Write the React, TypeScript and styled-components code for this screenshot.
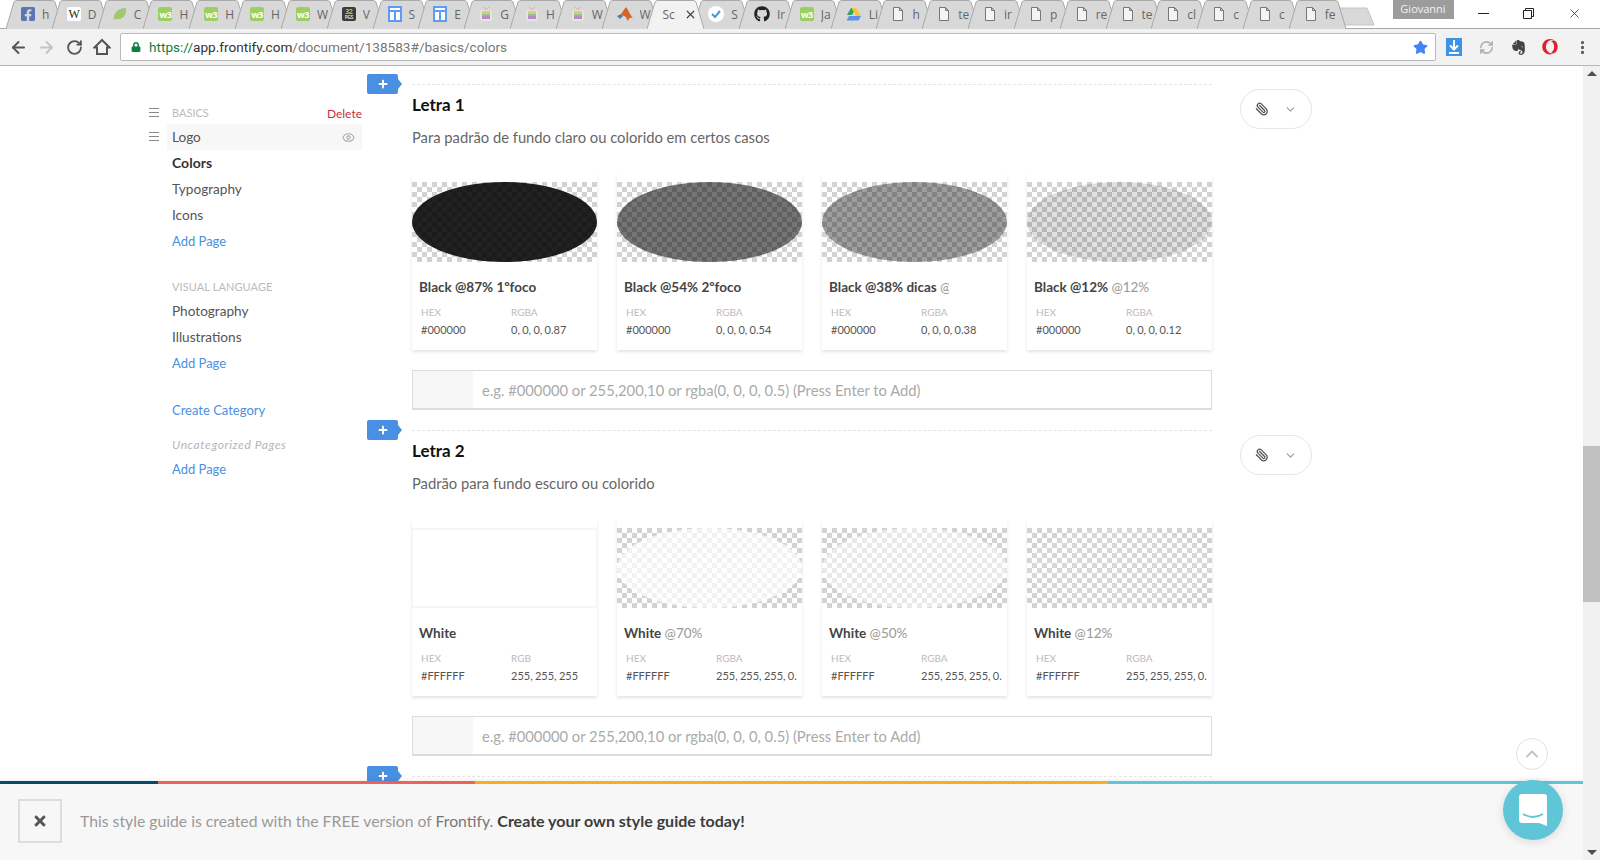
import styled, { createGlobalStyle } from 'styled-components';
import { ArrowLeft, ArrowRight, ChevronDown, ChevronUp, Eye, MoreVertical, Paperclip, RefreshCw, RotateCw, Star, X } from 'lucide-react';
import { FaFacebookSquare, FaGithub, FaLock, FaOpera, FaPlus, FaTimes } from 'react-icons/fa';
import { SiEvernote } from 'react-icons/si';

const GlobalStyle = createGlobalStyle`
  html, body {
    margin: 0;
    padding: 0;
    height: 860px;
    overflow: hidden;
    background: #fff;
    font-family: Lato, "Open Sans", sans-serif;
  }
  * { box-sizing: border-box; }
`;

const Page = styled.div`
  width: 1600px;
  height: 860px;
  display: flex;
  flex-direction: column;
  overflow: hidden;
`;

/* browser chrome */
const TabStrip = styled.div`
  height: 28px;
  display: flex;
  padding-left: 6px;
  background: #fff;
`;

const Tab = styled.div<{ $active?: boolean }>`
  position: relative;
  flex: none;
  width: 57px;
  height: 28px;
  margin-right: -11.2px;
  padding-left: 15px;
  display: flex;
  align-items: center;
  gap: ${(p) => (p.$active ? '0' : '7px')};
  z-index: ${(p) => (p.$active ? 2 : 1)};
  font-family: "Open Sans", sans-serif;
  font-size: 12px;
  color: #666;
`;

const TabShape = styled.svg`
  position: absolute;
  left: 0;
  top: 0;
  width: 57px;
  height: 29px;
  z-index: -1;
`;

const TabLabel = styled.span<{ $wide?: boolean }>`
  width: ${(p) => (p.$wide ? '20px' : '11px')};
  overflow: hidden;
  white-space: nowrap;
`;

const TabClose = styled.span`
  display: flex;
  margin-left: 2px;
  color: #444;
`;

const NewTab = styled.svg`
  flex: none;
  width: 38px;
  height: 20px;
  margin: 7px 0 0 3px;
`;

const WindowArea = styled.div`
  margin-left: auto;
  margin-right: 3px;
  display: flex;
  align-items: flex-start;
`;

const ProfileBadge = styled.div`
  width: 61px;
  height: 19px;
  margin-right: 7px;
  background: #9c9c9c;
  color: #f2f2f2;
  font-family: "Open Sans", sans-serif;
  font-size: 11px;
  line-height: 17px;
  text-align: center;
`;

const WindowButton = styled.div`
  width: 45.5px;
  height: 26px;
  display: flex;
  align-items: center;
  justify-content: center;
  color: #222;
`;

const Toolbar = styled.div`
  height: 38px;
  flex: none;
  display: flex;
  align-items: center;
  padding-left: 4px;
  background: #f2f2f2;
  border-top: 1px solid #a9a9a9;
  border-bottom: 1px solid #b5b5b5;
`;

const NavButton = styled.div<{ $muted?: boolean }>`
  width: 28px;
  height: 28px;
  flex: none;
  display: flex;
  align-items: center;
  justify-content: center;
  color: ${(p) => (p.$muted ? '#c4c4c4' : '#555')};
`;

const AddressBar = styled.div`
  width: 1316px;
  height: 28px;
  margin: 0 2px 0 4px;
  padding: 0 7px 0 10px;
  display: flex;
  align-items: center;
  background: #fff;
  border: 1px solid #b8b8b8;
  border-radius: 2px;
  font-family: Roboto, sans-serif;
  font-size: 13.6px;
  color: #777;
`;

const Secure = styled.span`
  display: flex;
  margin-right: 8px;
  color: #0b8043;
`;

const Scheme = styled.span`
  color: #0b8043;
`;

const Host = styled.span`
  color: #333;
`;

const BookmarkStar = styled.span`
  display: flex;
  margin-left: auto;
  color: #4285f4;
`;

const ExtensionSlot = styled.div<{ $color?: string }>`
  width: 32px;
  height: 28px;
  flex: none;
  display: flex;
  align-items: center;
  justify-content: center;
  color: ${(p) => p.$color || '#444'};
`;

/* favicons */
const IconBox = styled.span<{ $bg: string; $color?: string; $size?: number }>`
  flex: none;
  width: 14px;
  height: 14px;
  border-radius: 2px;
  display: flex;
  flex-direction: column;
  align-items: center;
  justify-content: center;
  overflow: hidden;
  background: ${(p) => p.$bg};
  color: ${(p) => p.$color || '#fff'};
  font-size: ${(p) => p.$size || 9}px;
  font-weight: 700;
  line-height: 1;
  letter-spacing: -0.5px;
`;

const SerifGlyph = styled.span`
  font-family: "Liberation Serif", serif;
  font-size: 12px;
  font-weight: 400;
  color: #222;
`;

const PgsCount = styled.span`
  font-size: 7px;
  color: #9fce63;
`;

const Favicon = ({ kind }: { kind: string }) => {
  switch (kind) {
    case 'fb':
      return <FaFacebookSquare size={16} color="#5a76b2" style={{ flex: 'none', margin: '0 -1px' }} />;
    case 'wiki':
      return <IconBox $bg="#fff"><SerifGlyph>W</SerifGlyph></IconBox>;
    case 'leaf':
      return (
        <svg width="14" height="14" viewBox="0 0 14 14" style={{ flex: 'none' }}>
          <path d="M1 13C0 6 5 1 13 1c1 7-3 12-10 11l-2 1z" fill="#a3c76d" />
        </svg>
      );
    case 'w3':
      return <IconBox $bg="#9ccf62">w3</IconBox>;
    case 'pgs':
      return <IconBox $bg="#3a3a3a" $color="#d5d5d5" $size={5}><PgsCount>32</PgsCount>PGS</IconBox>;
    case 'layout':
      return (
        <svg width="14" height="16" viewBox="0 0 14 16" style={{ flex: 'none' }}>
          <rect x="1" y="1" width="12" height="14" fill="#fff" stroke="#5d9cf5" strokeWidth="2" />
          <path d="M1 5h12M7 5v10" stroke="#5d9cf5" strokeWidth="2" />
        </svg>
      );
    case 'tv':
      return (
        <svg width="14" height="16" viewBox="0 0 14 16" style={{ flex: 'none' }}>
          <path d="M4 1l3 3 3-3" stroke="#bbb" fill="none" />
          <rect x="1" y="4" width="12" height="11" rx="2" fill="#e8e4da" />
          <rect x="3" y="5" width="8" height="3" fill="#f0c75e" />
          <rect x="3" y="8" width="8" height="2" fill="#7fc7a2" />
          <rect x="3" y="10" width="8" height="3" fill="#b28dc9" />
        </svg>
      );
    case 'matlab':
      return (
        <svg width="16" height="14" viewBox="0 0 16 14" style={{ flex: 'none' }}>
          <path d="M0 9l4-2 2 2-3 3z" fill="#4a7fb5" />
          <path d="M4 7l5-7c2 2 4 8 7 11-3-1-4 0-5 3-2-3-3-6-5-5z" fill="#d9622b" />
        </svg>
      );
    case 'check':
      return (
        <svg width="16" height="16" viewBox="0 0 16 16" style={{ flex: 'none' }}>
          <circle cx="8" cy="8" r="8" fill="#fff" />
          <path d="M4 8l3 3 5-6" stroke="#3b9ae1" strokeWidth="2" fill="none" />
        </svg>
      );
    case 'github':
      return <FaGithub size={16} color="#222" style={{ flex: 'none' }} />;
    case 'drive':
      return (
        <svg width="16" height="14" viewBox="0 0 16 14" style={{ flex: 'none' }}>
          <path d="M5 1h5l-4 7H1z" fill="#2fa561" />
          <path d="M5.500 1H10l5 8h-5z" fill="#f7c633" />
          <path d="M3 9h12l-2.500 4.500h-12z" fill="#5c93e8" />
        </svg>
      );
    default:
      return (
        <svg width="14" height="16" viewBox="0 0 14 16" style={{ flex: 'none' }}>
          <path d="M2.500 1.500h6l3 3v10h-9z M8.500 1.500v3h3" fill="#f4f4f4" stroke="#777" />
        </svg>
      );
  }
};

/* page */
const Viewport = styled.div`
  flex: 1;
  min-height: 0;
  display: flex;
`;

const Main = styled.div`
  position: relative;
  flex: 1;
  min-width: 0;
  display: flex;
  align-items: flex-start;
  padding-left: 149px;
  overflow: hidden;
`;

const ScrollTrack = styled.div`
  position: relative;
  flex: none;
  width: 17px;
  display: flex;
  flex-direction: column;
  align-items: center;
  justify-content: space-between;
  padding: 5px 0;
  background: #f1f1f1;
`;

const ScrollThumb = styled.div`
  position: absolute;
  left: 0;
  top: 380px;
  width: 17px;
  height: 156px;
  background: #c1c1c1;
`;

const ScrollArrow = styled.div<{ $down?: boolean }>`
  width: 0;
  height: 0;
  border-left: 5px solid transparent;
  border-right: 5px solid transparent;
  ${(p) => (p.$down ? 'border-top: 5px solid #505050;' : 'border-bottom: 5px solid #505050;')}
`;

const Sidebar = styled.nav`
  flex: none;
  width: 213px;
  padding-top: 35px;
  color: #555;
`;

const NavRow = styled.div`
  display: flex;
  align-items: center;
  height: 26px;
`;

const CategoryRow = styled(NavRow)`
  height: 23px;
`;

const HandleSlot = styled.div`
  flex: none;
  width: 18px;
  height: 10px;
`;

const Handle = styled.div`
  width: 10px;
  height: 9px;
  border-top: 1px solid #888;
  border-bottom: 1px solid #888;
  position: relative;

  &::after {
    content: '';
    position: absolute;
    left: 0;
    right: 0;
    top: 3px;
    height: 1px;
    background: #888;
  }
`;

const CategoryTitle = styled.div`
  padding-left: 5px;
  font-size: 11px;
  color: #bbb;
  text-transform: uppercase;
`;

const DeleteLink = styled.span`
  margin-left: auto;
  font-size: 12px;
  color: #c9303e;
  position: relative;
  top: 1px;
`;

const NavItem = styled.div<{ $selected?: boolean; $hover?: boolean; $link?: boolean }>`
  width: 195px;
  height: 26px;
  padding: 0 7px ${(p) => (p.$selected ? '2px' : '0')} 5px;
  display: flex;
  align-items: center;
  justify-content: space-between;
  background: ${(p) => (p.$hover ? '#f7f7f7' : 'transparent')};
  color: ${(p) => (p.$selected ? '#333' : p.$link ? '#4a90e2' : '#555')};
  font-size: ${(p) => (p.$link ? '13px' : p.$selected ? '14px' : '13.6px')};
  font-weight: ${(p) => (p.$selected ? 700 : 400)};
`;

const NavGroup = styled.div<{ $gap: number }>`
  margin-top: ${(p) => p.$gap}px;
`;

const GroupHeading = styled.div`
  height: 22px;
  line-height: 22px;
  padding-left: 23px;
  font-size: 11px;
  letter-spacing: 0.1px;
  color: #bbb;
`;

const MutedHeading = styled(GroupHeading)`
  font-size: 12px;
  font-style: italic;
  letter-spacing: 0.6px;
  color: #b5b5b5;
`;

const Content = styled.div`
  flex: none;
  width: 800px;
  margin-left: 50px;
  padding-top: 18px;
`;

const Section = styled.section`
  position: relative;
  border-top: 1px dashed #e4e4e4;
  padding: 9px 0 20px;
`;

const AddTag = styled.div`
  position: absolute;
  left: -45px;
  top: -11px;
  width: 31px;
  height: 20px;
  display: flex;
  align-items: center;
  justify-content: center;
  background: #4a90e2;
  border-radius: 2px;
  color: #fff;

  &::after {
    content: '';
    position: absolute;
    left: 31px;
    top: 5px;
    border-top: 5px solid transparent;
    border-bottom: 5px solid transparent;
    border-left: 4px solid #4a90e2;
  }
`;

const AttachPill = styled.div`
  position: absolute;
  left: 828px;
  top: 4px;
  width: 72px;
  height: 40px;
  padding-left: 14px;
  display: flex;
  align-items: center;
  gap: 15px;
  border: 1px solid #e6e6e6;
  border-radius: 20px;
  color: #555;
`;

const ClipIcon = styled(Paperclip)`
  transform: scaleX(-1);
`;

const SectionTitle = styled.h2`
  margin: 0;
  font-size: 17px;
  line-height: 22px;
  font-weight: 700;
  color: #111;
`;

const SectionText = styled.p`
  margin: 10px 0 26px;
  font-size: 14.75px;
  line-height: 22px;
  color: #666;
`;

const CardGrid = styled.div`
  display: grid;
  grid-template-columns: repeat(4, 185px);
  gap: 20px;
`;

const Card = styled.article`
  height: 176px;
  padding-top: 8px;
  background: #fff;
  box-shadow: 0 2px 3px rgba(0, 0, 0, 0.11);
`;

const Swatch = styled.div`
  height: 80px;
  background: repeating-conic-gradient(#d2d2d2 0 25%, #fff 0 50%) 5px 0 / 10px 10px;
`;

const PlainSwatch = styled.div`
  height: 80px;
  background: #fff;
  border: 1px solid #f6f6f6;
  border-width: 2px 1px;
`;

const SwatchOval = styled.div<{ $fill: string }>`
  width: 100%;
  height: 100%;
  border-radius: 50%;
  background: ${(p) => p.$fill};
`;

const CardName = styled.div`
  max-width: 120px;
  margin: 17px 0 0 7px;
  overflow: hidden;
  white-space: nowrap;
  font-size: 13.5px;
  line-height: 17px;
  font-weight: 700;
  color: #444;
`;

const CardNameNote = styled.span`
  font-weight: 400;
  color: #999;
`;

const ValueGrid = styled.div`
  display: grid;
  grid-template-columns: 90px 81px;
  margin: 9px 0 0 9px;
`;

const ValueLabel = styled.div`
  font-size: 10px;
  line-height: 14px;
  color: #bbb;
`;

const ValueText = styled.div`
  margin-top: 4px;
  overflow: hidden;
  white-space: nowrap;
  font-size: 11px;
  line-height: 14px;
  word-spacing: -0.5px;
  color: #555;
`;

const ColorInput = styled.div`
  height: 40px;
  margin-top: 20px;
  display: flex;
  align-items: center;
  border: 1px solid #dcdcdc;
  border-width: 1px 1px 2px 1px;
  font-size: 14.75px;
  color: #aaa;
`;

const ColorPreview = styled.div`
  width: 60px;
  height: 100%;
  margin-right: 9px;
  background: #f7f7f7;
`;

const Banner = styled.div`
  position: absolute;
  left: 0;
  right: 0;
  bottom: 0;
  height: 79px;
  z-index: 3;
  background: #f7f7f7;
  box-shadow: 0 -1px 4px rgba(0, 0, 0, 0.08);
`;

const StripeRow = styled.div`
  display: flex;
  height: 3px;
`;

const Stripe = styled.div<{ $grow: number; $color: string }>`
  flex: ${(p) => p.$grow} 0 0;
  background: ${(p) => p.$color};
`;

const BannerBody = styled.div`
  display: flex;
  align-items: center;
  gap: 18px;
  padding: 15px 18px 0;
`;

const BannerText = styled.div`
  padding-bottom: 2px;
  font-size: 15.75px;
  color: #999;
`;

const BannerClose = styled.div`
  width: 44px;
  height: 44px;
  flex: none;
  display: flex;
  align-items: center;
  justify-content: center;
  border: 2px solid #ddd;
  color: #555;
`;

const BrandName = styled.span`
  color: #777;
`;

const BannerCta = styled.strong`
  font-size: 16px;
  font-weight: 700;
  color: #3c3c3c;
`;

const ScrollTop = styled.div`
  position: absolute;
  right: 35px;
  bottom: 90px;
  width: 32px;
  height: 32px;
  display: flex;
  align-items: center;
  justify-content: center;
  border: 1px solid #e2e2e2;
  border-radius: 50%;
  background: #fff;
  color: #c4c4c4;
`;

const ChatButton = styled.div`
  position: absolute;
  right: 20px;
  bottom: 20px;
  width: 60px;
  height: 60px;
  z-index: 4;
  display: flex;
  align-items: center;
  justify-content: center;
  border-radius: 50%;
  background: #5fc6d8;
  box-shadow: 0 2px 10px rgba(0, 0, 0, 0.12);
`;

const tabs = [
  ['fb', 'h'], ['wiki', 'D'], ['leaf', 'C'], ['w3', 'H'], ['w3', 'H'], ['w3', 'H'], ['w3', 'W'],
  ['pgs', 'V'], ['layout', 'S'], ['layout', 'E'], ['tv', 'G'], ['tv', 'H'], ['tv', 'W'], ['matlab', 'W'],
  ['active', 'Sc'], ['check', 'S'], ['github', 'Ir'], ['w3', 'Ja'], ['drive', 'Li'], ['doc', 'h'], ['doc', 'te'],
  ['doc', 'ir'], ['doc', 'p'], ['doc', 're'], ['doc', 'te'], ['doc', 'cl'], ['doc', 'c'], ['doc', 'c'], ['doc', 'fe'],
];

interface SwatchData {
  name: string;
  note?: string;
  hex: string;
  mode: string;
  value: string;
  fill?: string;
}

const letra1: SwatchData[] = [
  { name: 'Black @87% 1ºfoco', hex: '#000000', mode: 'RGBA', value: '0, 0, 0, 0.87', fill: 'rgba(0,0,0,0.87)' },
  { name: 'Black @54% 2ºfoco', hex: '#000000', mode: 'RGBA', value: '0, 0, 0, 0.54', fill: 'rgba(0,0,0,0.54)' },
  { name: 'Black @38% dicas', note: '@38%', hex: '#000000', mode: 'RGBA', value: '0, 0, 0, 0.38', fill: 'rgba(0,0,0,0.38)' },
  { name: 'Black @12%', note: '@12%', hex: '#000000', mode: 'RGBA', value: '0, 0, 0, 0.12', fill: 'rgba(0,0,0,0.12)' },
];

const letra2: SwatchData[] = [
  { name: 'White', hex: '#FFFFFF', mode: 'RGB', value: '255, 255, 255' },
  { name: 'White', note: '@70%', hex: '#FFFFFF', mode: 'RGBA', value: '255, 255, 255, 0.7', fill: 'rgba(255,255,255,0.7)' },
  { name: 'White', note: '@50%', hex: '#FFFFFF', mode: 'RGBA', value: '255, 255, 255, 0.5', fill: 'rgba(255,255,255,0.5)' },
  { name: 'White', note: '@12%', hex: '#FFFFFF', mode: 'RGBA', value: '255, 255, 255, 0.12', fill: 'rgba(255,255,255,0.12)' },
];

const SwatchCard = ({ data }: { data: SwatchData }) => (
  <Card>
    {data.fill ? (
      <Swatch>
        <SwatchOval $fill={data.fill} />
      </Swatch>
    ) : (
      <PlainSwatch />
    )}
    <CardName>
      {data.name} {data.note && <CardNameNote>{data.note}</CardNameNote>}
    </CardName>
    <ValueGrid>
      <ValueLabel>HEX</ValueLabel>
      <ValueLabel>{data.mode}</ValueLabel>
      <ValueText>{data.hex}</ValueText>
      <ValueText>{data.value}</ValueText>
    </ValueGrid>
  </Card>
);

const ColorSection = ({ title, text, cards }: { title: string; text: string; cards: SwatchData[] }) => (
  <Section>
    <AddTag>
      <FaPlus size={10} />
    </AddTag>
    <AttachPill>
      <ClipIcon size={14} strokeWidth={2.2} />
      <ChevronDown size={13} color="#999" />
    </AttachPill>
    <SectionTitle>{title}</SectionTitle>
    <SectionText>{text}</SectionText>
    <CardGrid>
      {cards.map((c) => (
        <SwatchCard key={c.name + c.value} data={c} />
      ))}
    </CardGrid>
    <ColorInput>
      <ColorPreview />
      e.g. #000000 or 255,200,10 or rgba(0, 0, 0, 0.5) (Press Enter to Add)
    </ColorInput>
  </Section>
);

const App = () => (
  <Page>
    <GlobalStyle />
    <TabStrip>
      {tabs.map(([kind, label], i) => (
        <Tab key={i} $active={kind === 'active'}>
          <TabShape viewBox="0 0 57 29">
            <path
              d="M0 29L8 2Q9 .5 11 .5H46Q48 .5 49 2L57 29"
              fill={kind === 'active' ? '#f2f2f2' : '#d8d8d8'}
              stroke="#a9a9a9"
            />
          </TabShape>
          {kind !== 'active' && <Favicon kind={kind} />}
          <TabLabel $wide={kind === 'active'}>{label}</TabLabel>
          {kind === 'active' && (
            <TabClose>
              <X size={13} strokeWidth={2.2} />
            </TabClose>
          )}
        </Tab>
      ))}
      <NewTab viewBox="0 0 38 20">
        <path d="M1 1H29L36 18H7z" fill="#d8d8d8" stroke="#c4c4c4" />
      </NewTab>
      <WindowArea>
        <ProfileBadge>Giovanni</ProfileBadge>
        <WindowButton>
          <svg width="11" height="11" viewBox="0 0 11 11">
            <path d="M0 5.500h11" stroke="#222" />
          </svg>
        </WindowButton>
        <WindowButton>
          <svg width="11" height="11" viewBox="0 0 11 11">
            <path d="M.5 2.500h8v8h-8zM2.500 2.500v-2h8v8h-2" fill="none" stroke="#222" />
          </svg>
        </WindowButton>
        <WindowButton>
          <X size={15} strokeWidth={1.2} />
        </WindowButton>
      </WindowArea>
    </TabStrip>
    <Toolbar>
      <NavButton>
        <ArrowLeft size={19} strokeWidth={2.4} />
      </NavButton>
      <NavButton $muted>
        <ArrowRight size={19} strokeWidth={2.4} />
      </NavButton>
      <NavButton>
        <RotateCw size={17} strokeWidth={2.6} />
      </NavButton>
      <NavButton>
        <svg width="18" height="18" viewBox="0 0 18 18">
          <path d="M9 2L1.500 9.500H4V16h10V9.500h2.500z" fill="none" stroke="#555" strokeWidth="2" />
        </svg>
      </NavButton>
      <AddressBar>
        <Secure>
          <FaLock size={10} />
        </Secure>
        <Scheme>https://</Scheme>
        <Host>app.frontify.com</Host>/document/138583#/basics/colors
        <BookmarkStar>
          <Star size={15} fill="#4285f4" />
        </BookmarkStar>
      </AddressBar>
      <ExtensionSlot $color="#4a9be8">
        <svg width="16" height="18" viewBox="0 0 16 18">
          <rect width="16" height="18" fill="#3d94e6" />
          <path d="M8 2v9M4 7.500l4 4 4-4M3 15h10" stroke="#fff" strokeWidth="2" fill="none" />
        </svg>
      </ExtensionSlot>
      <ExtensionSlot $color="#b0b0b0">
        <RefreshCw size={15} strokeWidth={2.6} />
      </ExtensionSlot>
      <ExtensionSlot $color="#444">
        <SiEvernote size={15} />
      </ExtensionSlot>
      <ExtensionSlot $color="#e0202c">
        <FaOpera size={16} />
      </ExtensionSlot>
      <ExtensionSlot $color="#555">
        <MoreVertical size={17} strokeWidth={2.6} />
      </ExtensionSlot>
    </Toolbar>
    <Viewport>
      <Main>
        <Sidebar>
          <CategoryRow>
            <HandleSlot>
              <Handle />
            </HandleSlot>
            <CategoryTitle>Basics</CategoryTitle>
            <DeleteLink>Delete</DeleteLink>
          </CategoryRow>
          <NavRow>
            <HandleSlot>
              <Handle />
            </HandleSlot>
            <NavItem $hover>
              Logo
              <Eye size={13} color="#aaa" />
            </NavItem>
          </NavRow>
          <NavRow>
            <HandleSlot />
            <NavItem $selected>Colors</NavItem>
          </NavRow>
          <NavRow>
            <HandleSlot />
            <NavItem>Typography</NavItem>
          </NavRow>
          <NavRow>
            <HandleSlot />
            <NavItem>Icons</NavItem>
          </NavRow>
          <NavRow>
            <HandleSlot />
            <NavItem $link>Add Page</NavItem>
          </NavRow>
          <NavGroup $gap={22}>
            <GroupHeading>VISUAL LANGUAGE</GroupHeading>
            <NavRow>
              <HandleSlot />
              <NavItem>Photography</NavItem>
            </NavRow>
            <NavRow>
              <HandleSlot />
              <NavItem>Illustrations</NavItem>
            </NavRow>
            <NavRow>
              <HandleSlot />
              <NavItem $link>Add Page</NavItem>
            </NavRow>
          </NavGroup>
          <NavGroup $gap={21}>
            <NavRow>
              <HandleSlot />
              <NavItem $link>Create Category</NavItem>
            </NavRow>
          </NavGroup>
          <NavGroup $gap={11}>
            <MutedHeading>Uncategorized Pages</MutedHeading>
            <NavRow>
              <HandleSlot />
              <NavItem $link>Add Page</NavItem>
            </NavRow>
          </NavGroup>
        </Sidebar>
        <Content>
          <ColorSection title="Letra 1" text="Para padrão de fundo claro ou colorido em certos casos" cards={letra1} />
          <ColorSection title="Letra 2" text="Padrão para fundo escuro ou colorido" cards={letra2} />
          <Section>
            <AddTag>
              <FaPlus size={10} />
            </AddTag>
          </Section>
        </Content>
        <ScrollTop>
          <ChevronUp size={20} strokeWidth={2.4} />
        </ScrollTop>
        <Banner>
          <StripeRow>
            <Stripe $grow={158} $color="#004e6a" />
            <Stripe $grow={317} $color="#ef6356" />
            <Stripe $grow={633} $color="#f9ae1b" />
            <Stripe $grow={475} $color="#5fc6d8" />
          </StripeRow>
          <BannerBody>
            <BannerClose>
              <FaTimes size={16} />
            </BannerClose>
            <BannerText>
              This style guide is created with the FREE version of <BrandName>Frontify.</BrandName>{' '}
              <BannerCta>Create your own style guide today!</BannerCta>
            </BannerText>
          </BannerBody>
        </Banner>
        <ChatButton>
          <svg width="28" height="32" viewBox="0 0 28 32">
            <path d="M3 0H25Q28 0 28 3V32L20 29H3Q0 29 0 26V3Q0 0 3 0z" fill="#fff" />
            <path d="M4 20Q14 26 24 20" stroke="#5fc6d8" strokeWidth="1.800" fill="none" />
          </svg>
        </ChatButton>
      </Main>
      <ScrollTrack>
        <ScrollArrow />
        <ScrollThumb />
        <ScrollArrow $down />
      </ScrollTrack>
    </Viewport>
  </Page>
);

export default App;
